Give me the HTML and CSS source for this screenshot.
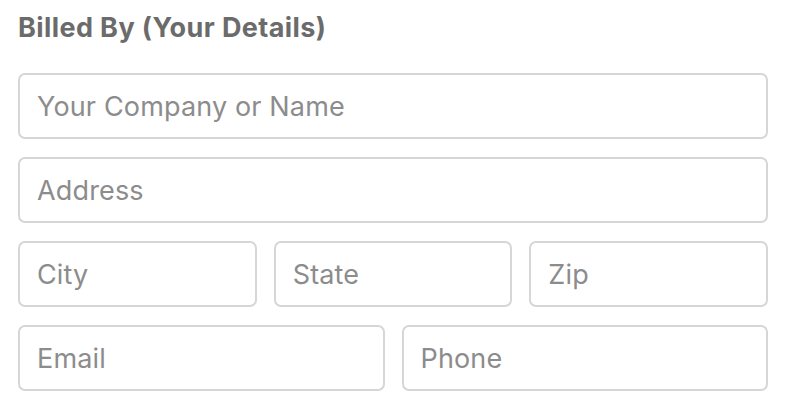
FILE: index.html
```html
<!DOCTYPE html>
<html>
<head>
<meta charset="utf-8">
<link rel="stylesheet" href="styles.css">
</head>
<body>
<section class="billed">
  <h2 class="title">Billed By (Your Details)</h2>
  <div class="fields">
    <input class="field" type="text" placeholder="Your Company or Name">
    <input class="field" type="text" placeholder="Address">
    <div class="row three">
      <input class="field" type="text" placeholder="City">
      <input class="field" type="text" placeholder="State">
      <input class="field" type="text" placeholder="Zip">
    </div>
    <div class="row two">
      <input class="field" type="text" placeholder="Email">
      <input class="field" type="text" placeholder="Phone">
    </div>
  </div>
</section>
</body>
</html>
```

FILE: styles.css
```css
html, body {
  margin: 0;
  padding: 0;
  background: #ffffff;
}
.billed {
  width: 750px;
  padding: 0 0 0 18px;
  font-family: Inter, "Open Sans", sans-serif;
}
.title {
  margin: 0;
  padding-top: 12px;
  height: 73px;
  box-sizing: border-box;
  font-size: 27px;
  line-height: 32px;
  font-weight: 700;
  color: #6b6b6b;
  letter-spacing: 0.4px;
}
.fields {
  display: flex;
  flex-direction: column;
  gap: 18px;
}
.row {
  display: grid;
  gap: 17px;
}
.row.three { grid-template-columns: 1fr 1fr 1fr; }
.row.two { grid-template-columns: 1fr 1fr; }
.field {
  box-sizing: border-box;
  width: 100%;
  height: 66px;
  margin: 0;
  padding: 0 17px;
  border: 2px solid #d6d6d6;
  border-radius: 7px;
  background: #fff;
  font-family: Inter, "Open Sans", sans-serif;
  font-size: 27px;
  letter-spacing: 0.15px;
  color: #333;
  outline: none;
}
.field::placeholder {
  color: #8c8c8c;
  opacity: 1;
}
```
